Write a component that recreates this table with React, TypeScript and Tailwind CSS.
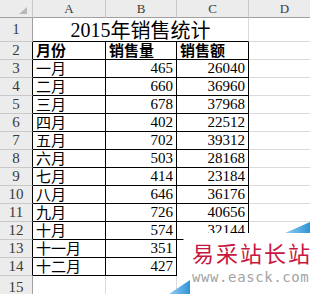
import React from 'react'

// Sheet snapshot: title + monthly sales table, with a site watermark over the corner.

const rows: [string, number, number | null][] = [
  ['一月', 465, 26040],
  ['二月', 660, 36960],
  ['三月', 678, 37968],
  ['四月', 402, 22512],
  ['五月', 702, 39312],
  ['六月', 503, 28168],
  ['七月', 414, 23184],
  ['八月', 646, 36176],
  ['九月', 726, 40656],
  ['十月', 574, 32144],
  // C13 / C14 sit under the watermark
  ['十一月', 351, null],
  ['十二月', 427, null],
]

const cjk = "font-['Noto_Sans_CJK_SC',sans-serif]"
const num = "font-['Liberation_Serif','Noto_Sans_CJK_SC',serif]"

function RowHead({ n, table }: { n: number; table?: boolean }) {
  return (
    <div
      className={`flex items-center justify-center bg-[#ececec] border-b border-b-[#c9c9c9] border-r text-[15px] text-[#3a3a3a] ${num} ${
        table ? 'border-r-black' : 'border-r-[#a0a0a0]'
      }`}
    >
      {n}
    </div>
  )
}

function Cell({
  children,
  right,
  black,
  className = '',
}: {
  children?: React.ReactNode
  right?: boolean
  black?: boolean
  className?: string
}) {
  return (
    <div
      className={`flex items-end px-[3px] pb-[1px] leading-[16px] border-r border-b whitespace-nowrap ${
        right ? 'justify-end' : 'justify-start'
      } ${black ? 'border-black' : 'border-[#dadada]'} ${className}`}
    >
      {children}
    </div>
  )
}

export default function App() {
  return (
    <div className="relative w-[310px] h-[294px] overflow-hidden bg-white text-black">
      <div className="grid grid-cols-[33px_73px_71px_72px_72px] grid-rows-[18px_24px_repeat(13,18px)]">
        {/* column headers */}
        <div className="relative bg-[#ececec] border-r border-r-[#c9c9c9] border-b border-b-[#a0a0a0]">
          <div className="absolute right-[5px] bottom-[3px] w-[8px] h-[7px] bg-[#b9b9b9] [clip-path:polygon(100%_0,100%_100%,0_100%)]" />
        </div>
        {['A', 'B', 'C', 'D'].map((c) => (
          <div
            key={c}
            className={`flex items-center justify-center bg-[#ececec] border-r border-r-[#c9c9c9] border-b border-b-[#a0a0a0] text-[13px] text-[#3a3a3a] ${num}`}
          >
            {c}
          </div>
        ))}

        {/* row 1: merged title */}
        <RowHead n={1} />
        <div
          className={`col-span-3 flex items-end justify-center border-b border-b-black border-r border-r-[#dadada] text-[20px] leading-[22px] ${num}`}
        >
          2015<span className={cjk}>年销售统计</span>
        </div>
        <Cell />

        {/* row 2: table head */}
        <RowHead n={2} table />
        {['月份', '销售量', '销售额'].map((h) => (
          <Cell key={h} black className={`text-[15px] font-bold ${cjk}`}>
            {h}
          </Cell>
        ))}
        <Cell />

        {rows.map(([m, q, v], i) => (
          <React.Fragment key={m}>
            <RowHead n={i + 3} table />
            <Cell black className={`text-[15px] ${cjk}`}>
              {m}
            </Cell>
            <Cell black right className={`text-[15px] ${num}`}>
              {q}
            </Cell>
            <Cell black right className={`text-[15px] ${num}`}>
              {v}
            </Cell>
            <Cell />
          </React.Fragment>
        ))}

        <RowHead n={15} />
        <Cell />
        <Cell />
        <Cell />
        <Cell />
      </div>

      {/* watermark */}
      <div className="absolute left-[177px] top-[233px] right-0 bottom-0 bg-white [clip-path:polygon(13px_0,100%_0,100%_100%,0_100%,0_13px)]">
        <div className="absolute left-[15px] top-[6px] text-[22px] leading-[26px] tracking-[2px] text-[#c8173f] font-['Noto_Sans_CJK_SC',serif] whitespace-nowrap">
          易采站长站
        </div>
        <div className="absolute left-[15px] top-[35px] text-[14px] leading-[18px] tracking-[0.6px] text-[#a3a3a3] font-['DejaVu_Sans_Mono',monospace] whitespace-nowrap">
          www.easck.com
        </div>
      </div>
      <div className="absolute left-[285px] top-[222px] w-[25px] h-[11px] bg-gradient-to-r from-[#8fd0f2] to-[#2b93d6] [clip-path:polygon(0_100%,100%_0,100%_100%)]" />
      <div className="absolute left-[169px] top-[280px] w-[21px] h-[14px] bg-gradient-to-r from-[#8fd0f2] to-[#2b93d6] [clip-path:polygon(0_100%,100%_0,100%_100%)]" />
    </div>
  )
}
